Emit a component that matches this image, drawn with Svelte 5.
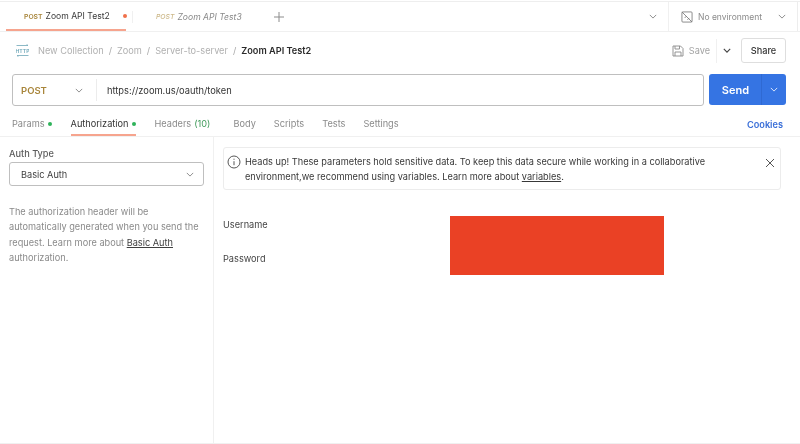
<script>
  const reqTabs = [
    { label: 'Params', dot: true },
    { label: 'Authorization', dot: true, active: true },
    { label: 'Headers', count: '(10)' },
    { label: 'Body' },
    { label: 'Scripts' },
    { label: 'Tests' },
    { label: 'Settings' }
  ];
</script>

<div class="page">
  <header class="tabbar">
    <div class="tab active">
      <span class="verb">POST</span>
      <span class="tab-name">Zoom API Test2</span>
      <span class="unsaved"></span>
    </div>
    <span class="tab-sep"></span>
    <div class="tab preview">
      <span class="verb">POST</span>
      <span class="tab-name">Zoom API Test3</span>
    </div>
    <svg class="plus" width="12" height="12" viewBox="0 0 12 12"><path d="M6 1v10M1 6h10" /></svg>
    <div class="spacer"></div>
    <svg class="chev tabs-chev" width="8" height="5" viewBox="0 0 10 6"><path d="M1 1l4 4 4-4" /></svg>
    <div class="env">
      <svg class="env-icon" width="12" height="12" viewBox="0 0 13 13">
        <rect x="1" y="1" width="11" height="11" rx="1" />
        <path d="M1 1l11 11M4 7.500l2-2M7 9.500l2-2" />
      </svg>
      <span>No environment</span>
      <svg class="chev" width="8" height="5" viewBox="0 0 10 6"><path d="M1 1l4 4 4-4" /></svg>
    </div>
  </header>

  <div class="crumbs">
    <svg class="http-icon" width="13" height="13" viewBox="0 0 13 13">
      <path d="M0.500 1.500H12M10.500 0.200L12 1.500M1 11.500h11.500M2.500 12.800L1 11.500" />
      <text x="6.500" y="8.700" text-anchor="middle">HTTP</text>
    </svg>
    <span class="crumb">New Collection</span><span class="slash">/</span>
    <span class="crumb">Zoom</span><span class="slash">/</span>
    <span class="crumb">Server-to-server</span><span class="slash">/</span>
    <span class="crumb current">Zoom API Test2</span>
    <div class="spacer"></div>
    <svg class="save-icon" width="12" height="12" viewBox="0 0 12 12">
      <path d="M1 1h7.500L11 3.500V11H1zM3 1v3h4.500V1M3 11V7h6v4" />
    </svg>
    <span class="save">Save</span>
    <span class="save-sep"><svg class="chev dark" width="8" height="5" viewBox="0 0 10 6"><path d="M1 1l4 4 4-4" /></svg></span>
    <button class="share">Share</button>
  </div>

  <div class="url-row">
    <div class="url-box">
      <div class="method">
        <span>POST</span>
        <svg class="chev" width="8" height="5" viewBox="0 0 10 6"><path d="M1 1l4 4 4-4" /></svg>
      </div>
      <div class="url">https://zoom.us/oauth/token</div>
    </div>
    <div class="send">
      <span class="send-label">Send</span>
      <span class="send-more"><svg width="8" height="5" viewBox="0 0 10 6"><path d="M1 1l4 4 4-4" /></svg></span>
    </div>
  </div>

  <nav class="req-tabs">
    {#each reqTabs as t}
      <div class="req-tab" class:active={t.active} class:wide={t.dot} class:counted={t.count}>
        {t.label}
        {#if t.count}<span class="count">{t.count}</span>{/if}
        {#if t.dot}<span class="dot"></span>{/if}
      </div>
    {/each}
    <div class="spacer"></div>
    <div class="cookies">Cookies</div>
  </nav>

  <main class="body">
    <aside class="side">
      <div class="side-label">Auth Type</div>
      <div class="select">
        <span>Basic Auth</span>
        <svg class="chev" width="8" height="5" viewBox="0 0 10 6"><path d="M1 1l4 4 4-4" /></svg>
      </div>
      <p class="hint">
        The authorization header will be automatically generated when you send the
        request. Learn more about <u>Basic Auth</u> authorization.
      </p>
    </aside>
    <section class="content">
      <div class="notice">
        <svg class="info" width="14" height="14" viewBox="0 0 14 14">
          <circle cx="7" cy="7" r="6" />
          <path d="M7 6.200v4M7 3.700v1.100" />
        </svg>
        <p>
          Heads up! These parameters hold sensitive data. To keep this data secure while working in a collaborative
          environment,we recommend using variables. Learn more about <u>variables</u>.
        </p>
        <svg class="close" width="10" height="10" viewBox="0 0 10 10"><path d="M1 1l8 8M9 1l-8 8" /></svg>
      </div>
      <div class="creds">
        <div class="cred-labels">
          <div>Username</div>
          <div>Password</div>
        </div>
        <div class="redacted"></div>
      </div>
    </section>
  </main>
</div>

<style>
  :global(body) {
    margin: 0;
    background: #fff;
    font-family: Inter, "Noto Sans", sans-serif;
  }
  .page {
    width: 800px;
    height: 444px;
    display: flex;
    flex-direction: column;
    overflow: hidden;
    background: #fff;
    color: #333;
    font-size: 9.200px;
    filter: blur(0.45px);
  }
  svg {
    fill: none;
    stroke: currentColor;
    flex: none;
  }
  .spacer {
    flex: 1;
  }
  .chev {
    color: #8a8a8a;
    stroke-width: 1.200;
  }
  .chev.dark {
    color: #444;
    stroke-width: 1.400;
  }

  /* top tab strip */
  .tabbar {
    height: 31px;
    margin-top: 1px;
    display: flex;
    align-items: center;
    border-top: 1px solid #eeeeee;
    border-bottom: 1px solid #f0f0f0;
    box-sizing: border-box;
  }
  .tab {
    height: 100%;
    box-sizing: border-box;
    display: flex;
    align-items: center;
    gap: 3px;
    white-space: nowrap;
  }
  .tab.active {
    width: 120px;
    margin-left: 6px;
    padding-left: 18px;
    border-bottom: 2px solid #f6a48e;
    padding-top: 1px;
  }
  .tab-sep {
    width: 1px;
    height: 12px;
    margin-left: 6px;
    background: #f0f0f0;
  }
  .tab.preview {
    width: 120px;
    padding-left: 23px;
  }
  .verb {
    font-size: 6.800px;
    font-weight: 600;
    color: #a8853a;
  }
  .tab-name {
    font-size: 8.600px;
    color: #3a3a3a;
  }
  .preview .verb {
    color: #cdb98a;
    font-style: italic;
    font-weight: 500;
  }
  .preview .tab-name {
    color: #8a8a8a;
    font-style: italic;
  }
  .unsaved {
    flex: none;
    width: 4px;
    height: 4px;
    border-radius: 50%;
    background: #f0704a;
    margin-left: 10px;
  }
  .plus {
    margin-left: 20px;
    color: #8c8c8c;
    stroke-width: 1;
  }
  .tabs-chev {
    margin-right: 11px;
  }
  .env {
    width: 130px;
    height: 100%;
    box-sizing: border-box;
    border-left: 1px solid #f0f0f0;
    border-right: 1px solid #ededed;
    margin-right: 2px;
    display: flex;
    align-items: center;
    padding-left: 12px;
    color: #8a8a8a;
    font-size: 8.500px;
  }
  .env span {
    margin-left: 5px;
    flex: 1;
  }
  .env .chev {
    margin-right: 11px;
  }
  .env-icon {
    color: #777;
    stroke-width: 0.900;
  }

  /* breadcrumb row */
  .crumbs {
    height: 37px;
    display: flex;
    align-items: center;
    padding: 0 14px 0 16px;
    color: #b0b0b0;
  }
  .http-icon {
    margin-right: 9px;
    color: #6ea7b8;
    stroke-width: 0.800;
  }
  .http-icon text {
    fill: currentColor;
    stroke: none;
    font-size: 5.200px;
    font-weight: 600;
  }
  .slash {
    margin: 0 5px;
    color: #a8a8a8;
  }
  .crumb.current {
    color: #2a2a2a;
    font-weight: 600;
  }
  .save-icon {
    color: #8a8a8a;
    stroke-width: 0.900;
  }
  .save {
    margin-left: 5px;
    color: #a3a3a3;
  }
  .save-sep {
    height: 24px;
    margin-left: 6px;
    padding-left: 6px;
    border-left: 1px solid #f0f0f0;
    display: flex;
    align-items: center;
    margin-right: 10px;
    width: 8px;
  }
  .share {
    width: 45px;
    height: 25px;
    box-sizing: border-box;
    padding: 0;
    background: #fff;
    border: 1px solid #dedede;
    border-radius: 3px;
    color: #333;
    font: inherit;
    font-weight: 500;
  }

  /* method + url */
  .url-row {
    display: flex;
    gap: 5px;
    padding: 0 14px 0 12px;
    height: 33px;
    margin-top: 5px;
  }
  .url-box {
    flex: 1;
    display: flex;
    align-items: center;
    border: 1px solid #bfbfbf;
    border-radius: 3px;
    box-sizing: border-box;
    height: 32px;
  }
  .method {
    width: 84px;
    height: 22px;
    box-sizing: border-box;
    padding: 0 13px 0 8px;
    display: flex;
    align-items: center;
    justify-content: space-between;
    color: #a8853a;
    font-weight: 600;
    font-size: 9.500px;
    border-right: 1px solid #ececec;
  }
  .url {
    padding-left: 10px;
    color: #333;
    font-size: 9.300px;
  }
  .send {
    width: 77px;
    height: 31px;
    display: flex;
    border-radius: 3px;
    background: #3574e3;
    color: #fff;
    font-weight: 600;
    font-size: 11px;
    overflow: hidden;
  }
  .send-label {
    flex: 1;
    display: flex;
    align-items: center;
    justify-content: center;
    padding-left: 1px;
  }
  .send-more {
    width: 24px;
    display: flex;
    align-items: center;
    justify-content: center;
    border-left: 1px solid #2f69d2;
  }

  /* request tabs */
  .req-tabs {
    height: 27px;
    margin-top: 3px;
    display: flex;
    align-items: stretch;
    padding: 0 17px 0 12px;
    border-bottom: 1px solid #f0f0f0;
    box-sizing: border-box;
    color: #8a8a8a;
    font-size: 9.200px;
  }
  .req-tab {
    display: flex;
    align-items: center;
    gap: 3px;
    margin-right: 18px;
    padding-top: 3px;
    box-sizing: border-box;
    border-bottom: 2px solid transparent;
  }
  .req-tab.wide {
    margin-right: 19px;
  }
  .req-tab.counted {
    margin-right: 23px;
  }
  .req-tab.active {
    color: #333;
    border-bottom-color: #f6a48e;
  }
  .count {
    color: #3f9a5a;
  }
  .dot {
    width: 4px;
    height: 4px;
    border-radius: 50%;
    background: #2fb35a;
  }
  .cookies {
    display: flex;
    align-items: center;
    padding-top: 2px;
    color: #3a6fd8;
    font-weight: 600;
  }

  /* auth pane */
  .body {
    flex: 1;
    display: flex;
    min-height: 0;
    border-bottom: 1px solid #f0f0f0;
  }
  .side {
    width: 214px;
    box-sizing: border-box;
    border-right: 1px solid #f0f0f0;
    padding: 10px 9px 0 9px;
  }
  .side-label {
    font-weight: 500;
    color: #5c5c5c;
    margin-bottom: 2px;
    line-height: 13px;
  }
  .select {
    height: 24px;
    box-sizing: border-box;
    border: 1px solid #bfbfbf;
    border-radius: 3px;
    display: flex;
    align-items: center;
    justify-content: space-between;
    padding: 0 9px 0 11px;
    color: #3f3f3f;
  }
  .hint {
    margin: 18px 0 0;
    line-height: 15.300px;
    color: #8a8a8a;
  }
  .hint u {
    color: #3f3f3f;
  }
  .content {
    flex: 1;
    padding: 10px 19px 0 9px;
  }
  .notice {
    display: flex;
    align-items: flex-start;
    border: 1px solid #ececec;
    border-radius: 3px;
    height: 43px;
    box-sizing: border-box;
    padding: 6px 5px 0 3px;
  }
  .notice p {
    margin: 0 0 0 4px;
    flex: 1;
    line-height: 15.300px;
    color: #383838;
  }
  .info {
    color: #444;
    stroke-width: 0.900;
    margin-top: 1px;
  }
  .close {
    color: #555;
    stroke-width: 1;
    margin: 4px 0 0;
  }
  .creds {
    display: flex;
    margin-top: 26px;
  }
  .cred-labels {
    width: 227px;
    color: #444;
    display: flex;
    flex-direction: column;
    gap: 22px;
    padding-top: 3px;
    line-height: 12px;
  }
  .redacted {
    width: 214px;
    height: 59px;
    background: #ea4125;
  }
</style>
